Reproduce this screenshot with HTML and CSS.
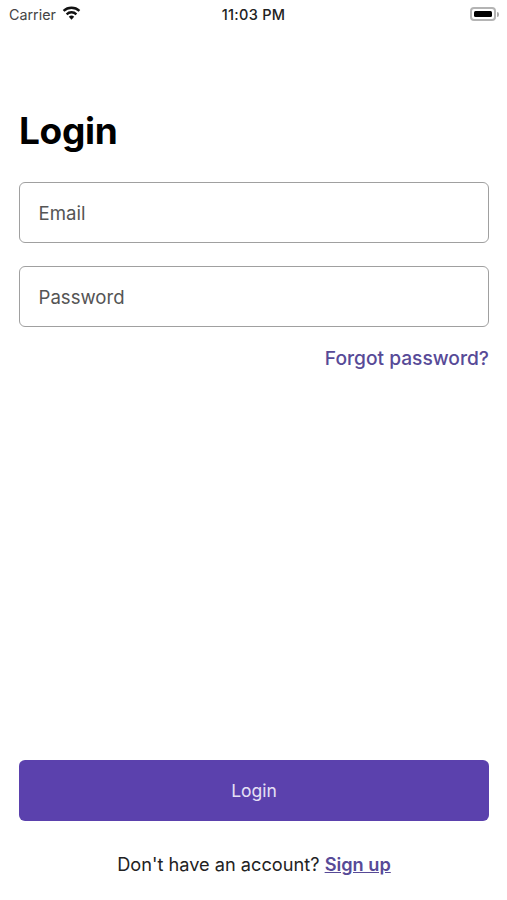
FILE: index.html
```html
<!DOCTYPE html>
<html lang="en">
<head>
<meta charset="utf-8">
<title>Login</title>
<link rel="stylesheet" href="styles.css">
</head>
<body>
<div class="screen">
  <header class="status">
    <div class="status-left">
      <span class="carrier">Carrier</span>
      <svg class="wifi" viewBox="0 0 20 14" aria-hidden="true">
        <path d="M10 14 7.2 10.9a4 4 0 0 1 5.6 0Z" />
        <path d="M5.7 9.3 4 7.4a8.6 8.6 0 0 1 12 0l-1.7 1.9a6.2 6.2 0 0 0-8.6 0Z" />
        <path d="M2.5 5.8.8 3.9a13.4 13.4 0 0 1 18.4 0l-1.7 1.9a11 11 0 0 0-15 0Z" />
      </svg>
    </div>
    <span class="clock">11:03 PM</span>
    <div class="status-right">
      <span class="battery"><span class="battery-fill"></span></span>
      <span class="battery-cap"></span>
    </div>
  </header>
  <main class="content">
    <h1 class="title">Login</h1>
    <div class="field"><span class="placeholder">Email</span></div>
    <div class="field"><span class="placeholder">Password</span></div>
    <a class="forgot">Forgot password?</a>
    <div class="bottom">
      <button class="submit" type="button">Login</button>
      <p class="signup">Don't have an account? <a class="signup-link">Sign up</a></p>
    </div>
  </main>
</div>
</body>
</html>
```
FILE: styles.css
```css
* { box-sizing: border-box; }
html, body { margin: 0; padding: 0; background: #fff; }
.screen {
  width: 507px;
  height: 900px;
  display: flex;
  flex-direction: column;
  overflow: hidden;
  font-family: "Inter", "Liberation Sans", sans-serif;
}
.status {
  height: 28px;
  padding: 0 9px;
  display: grid;
  grid-template-columns: 1fr auto 1fr;
  align-items: center;
  font-family: "Inter", "Liberation Sans", sans-serif;
  color: #222;
}
.status-left { display: flex; align-items: center; gap: 6px; }
.carrier { font-size: 14.3px; color: #444; }
.wifi { width: 19px; height: 14px; fill: #111; margin-top: -3px; }
.clock { font-size: 14.5px; font-weight: 500; letter-spacing: 0.3px; }
.status-right { display: flex; align-items: center; justify-content: flex-end; gap: 1px; margin-right: -1px; }
.battery {
  width: 26px;
  height: 14px;
  padding: 2px;
  border: 2px solid #b4b4b4;
  border-radius: 4px;
  display: flex;
}
.battery-fill { flex: 1; background: #000; border-radius: 1.5px; }
.battery-cap { width: 2px; height: 5px; background: #aaa; border-radius: 0 2px 2px 0; }
.content {
  flex: 1;
  display: flex;
  flex-direction: column;
  padding: 0 18px 0 19px;
}
.title {
  margin: 78px 0 26px;
  font-size: 37px;
  line-height: 50px;
  letter-spacing: -0.3px;
  font-weight: 700;
  color: #000;
}
.field {
  height: 61px;
  margin-bottom: 23px;
  padding: 0 19px 0 18.5px;
  display: flex;
  align-items: center;
  border: 1.5px solid #a0a0a0;
  border-radius: 6px;
  background: #fff;
}
.placeholder {
  font-size: 18.6px;
  color: #555;
}
.forgot {
  margin-top: -6px;
  align-self: flex-end;
  font-size: 19.2px;
  line-height: 28px;
  font-weight: 500;
  color: #574a97;
}
.bottom {
  margin-top: auto;
  padding-bottom: 22px;
  display: flex;
  flex-direction: column;
  align-items: center;
}
.submit {
  width: 100%;
  height: 61px;
  border: 0;
  border-radius: 6px;
  background: #5b41ad;
  color: #e6e0f5;
  font-family: "Inter", sans-serif;
  font-size: 17.5px;
}
.signup {
  margin: 29px 0 0;
  font-size: 18.2px;
  line-height: 28px;
  color: #222;
}
.signup-link {
  font-weight: 600;
  color: #574a97;
  text-decoration: underline;
}
```
